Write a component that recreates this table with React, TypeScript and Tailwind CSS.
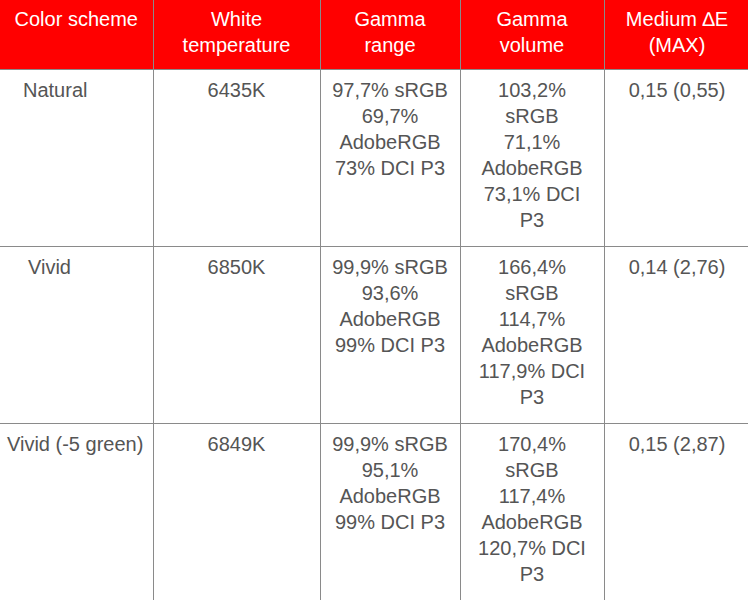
import React from "react";

type Row = {
  scheme: string;
  indent: string;
  temp: string;
  range: string[];
  volume: string[];
  delta: string;
};

const rows: Row[] = [
  {
    scheme: "Natural",
    indent: "pl-[23px]",
    temp: "6435K",
    range: ["97,7% sRGB", "69,7%", "AdobeRGB", "73% DCI P3"],
    volume: ["103,2%", "sRGB", "71,1%", "AdobeRGB", "73,1% DCI", "P3"],
    delta: "0,15 (0,55)",
  },
  {
    scheme: "Vivid",
    indent: "pl-[28px]",
    temp: "6850K",
    range: ["99,9% sRGB", "93,6%", "AdobeRGB", "99% DCI P3"],
    volume: ["166,4%", "sRGB", "114,7%", "AdobeRGB", "117,9% DCI", "P3"],
    delta: "0,14 (2,76)",
  },
  {
    scheme: "Vivid (-5 green)",
    indent: "pl-[7px]",
    temp: "6849K",
    range: ["99,9% sRGB", "95,1%", "AdobeRGB", "99% DCI P3"],
    volume: ["170,4%", "sRGB", "117,4%", "AdobeRGB", "120,7% DCI", "P3"],
    delta: "0,15 (2,87)",
  },
];

const headers = [
  ["Color scheme"],
  ["White", "temperature"],
  ["Gamma", "range"],
  ["Gamma", "volume"],
  ["Medium \u2206E", "(MAX)"],
];

function Lines({ lines }: { lines: string[] }) {
  return (
    <>
      {lines.map((l, i) => (
        <div key={i} className="whitespace-nowrap">
          {l}
        </div>
      ))}
    </>
  );
}

export default function App() {
  return (
    <div
      className="h-[600px] w-[748px] overflow-hidden bg-white text-[20px] leading-[26px]"
      style={{ fontFamily: '"Liberation Sans", Arial, sans-serif' }}
    >
      <table className="w-[750px] table-fixed border-collapse">
        <colgroup>
          <col className="w-[153px]" />
          <col className="w-[167px]" />
          <col className="w-[140px]" />
          <col className="w-[144px]" />
          <col className="w-[146px]" />
        </colgroup>
        <thead>
          <tr className="bg-[#ff0000] text-white">
            {headers.map((h, i) => (
              <th
                key={i}
                className="h-[69px] border border-t-0 border-[#8a8a8a] px-0 pt-[6px] pb-0 align-top text-center font-normal first:border-l-0"
              >
                <Lines lines={h} />
              </th>
            ))}
          </tr>
        </thead>
        <tbody className="text-[#555555]">
          {rows.map((r) => (
            <tr key={r.scheme} className="h-[177px]">
              <td className={`border border-l-0 border-[#8a8a8a] pt-[7px] align-top text-left whitespace-nowrap ${r.indent}`}>
                {r.scheme}
              </td>
              <td className="border border-[#8a8a8a] pt-[7px] align-top text-center">{r.temp}</td>
              <td className="border border-[#8a8a8a] pt-[7px] align-top text-center">
                <Lines lines={r.range} />
              </td>
              <td className="border border-[#8a8a8a] pt-[7px] align-top text-center">
                <Lines lines={r.volume} />
              </td>
              <td className="border border-[#8a8a8a] pt-[7px] align-top text-center">{r.delta}</td>
            </tr>
          ))}
        </tbody>
      </table>
    </div>
  );
}
